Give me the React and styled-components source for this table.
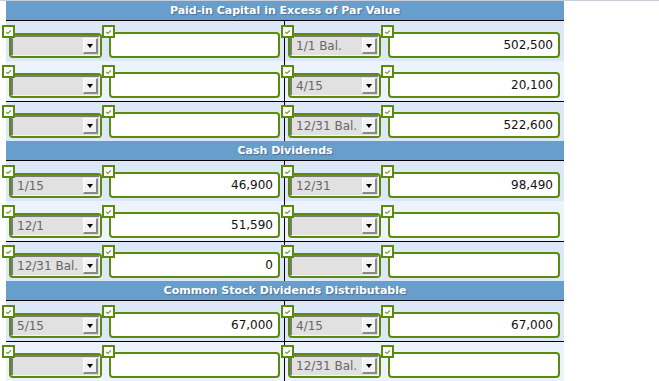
import React from "react";
import styled, { createGlobalStyle } from "styled-components";

const GlobalStyle = createGlobalStyle`
  html, body { margin: 0; padding: 0; background: #ffffff; }
  body { font-family: "DejaVu Sans", Verdana, sans-serif; }
`;

const GREEN = "#5b8a0c";

const Page = styled.div`
  width: 659px;
  height: 381px;
  overflow: hidden;
  border-top: 1px solid #c9ced8;
  box-sizing: border-box;
`;

const Table = styled.div`
  margin-left: 6px;
  width: 558px;
`;

const SectionHeader = styled.div`
  height: 20px;
  box-sizing: border-box;
  background: #689ecb;
  border-bottom: 1px solid #000;
  color: #fff;
  font-weight: bold;
  font-size: 11px;
  line-height: 19px;
  text-align: center;
  text-shadow: 1px 1px 1px rgba(40, 60, 90, 0.45);
`;

const Row = styled.div`
  display: grid;
  grid-template-columns: 279px 279px;
  height: 40px;
  box-sizing: border-box;
  background: ${(p) => (p.$shade ? "#dce8f7" : "#ecf3fd")};
  border-top: ${(p) => (p.$total ? "1px solid #000" : "none")};
`;

const Cell = styled.div`
  display: flex;
  align-items: flex-end;
  gap: 7px;
  padding: 0 4px 3px 3px;
  box-sizing: border-box;
  border-right: ${(p) => (p.$divider ? "1px solid #000" : "none")};
`;

const Field = styled.div`
  position: relative;
  flex: ${(p) => (p.$grow ? "1" : "none")};
  display: flex;
`;

const Check = styled.span`
  position: absolute;
  top: ${(p) => p.$top}px;
  left: -7px;
  width: 13px;
  height: 13px;
  box-sizing: border-box;
  border: 2px solid ${GREEN};
  background: #fff;
  display: flex;
  align-items: center;
  justify-content: center;
  z-index: 2;
`;

const SelectBox = styled.div`
  width: 93px;
  height: 25px;
  box-sizing: border-box;
  border: 2px solid ${GREEN};
  border-radius: 4px;
  background: #fff;
  display: flex;
`;

const SelectInner = styled.div`
  flex: 1;
  display: flex;
  align-items: center;
  box-sizing: border-box;
  border-top: 2px solid #7a7a7a;
  border-left: 2px solid #7a7a7a;
  border-bottom: 1px solid #f4f4f4;
  border-right: 1px solid #f4f4f4;
  background: #e1e1e1;
  padding-left: 4px;
  padding-right: 1px;
  min-width: 0;
`;

const SelectText = styled.span`
  flex: 1;
  font-size: 12px;
  color: #666;
  white-space: nowrap;
  overflow: hidden;
`;

const ArrowButton = styled.span`
  width: 15px;
  height: 16px;
  box-sizing: border-box;
  background: #f2f2f2;
  border-top: 1px solid #ffffff;
  border-left: 1px solid #ffffff;
  border-right: 2px solid #8a8a8a;
  border-bottom: 2px solid #8a8a8a;
  display: flex;
  align-items: center;
  justify-content: center;
`;

const Triangle = styled.span`
  width: 0;
  height: 0;
  border-left: 3.5px solid transparent;
  border-right: 3.5px solid transparent;
  border-top: 4px solid #000;
`;

const TextBox = styled.input`
  flex: 1;
  width: 100%;
  height: 26px;
  box-sizing: border-box;
  border: 2px solid ${GREEN};
  border-radius: 4px;
  background: #fff;
  font-family: "DejaVu Sans", Verdana, sans-serif;
  font-size: 12px;
  color: #111;
  text-align: right;
  padding: 0 5px 0 4px;
  outline: none;
  margin: 0;
`;

const CheckMark = () => (
  <svg width="9" height="9" viewBox="0 0 9 9">
    <polyline points="2.2,5 3.9,6.4 7,3.4" fill="none" stroke="#72a034" strokeWidth="1.3" />
  </svg>
);

const Select = ({ value }) => (
  <Field>
    <Check $top={-8}>
      <CheckMark />
    </Check>
    <SelectBox>
      <SelectInner>
        <SelectText>{value}</SelectText>
        <ArrowButton>
          <Triangle />
        </ArrowButton>
      </SelectInner>
    </SelectBox>
  </Field>
);

const Amount = ({ value }) => (
  <Field $grow>
    <Check $top={-7}>
      <CheckMark />
    </Check>
    <TextBox readOnly value={value} />
  </Field>
);

const sections = [
  {
    title: "Paid-in Capital in Excess of Par Value",
    rows: [
      { l: ["", ""], r: ["1/1 Bal.", "502,500"] },
      { l: ["", ""], r: ["4/15", "20,100"] },
      { l: ["", ""], r: ["12/31 Bal.", "522,600"], total: true },
    ],
  },
  {
    title: "Cash Dividends",
    rows: [
      { l: ["1/15", "46,900"], r: ["12/31", "98,490"] },
      { l: ["12/1", "51,590"], r: ["", ""] },
      { l: ["12/31 Bal.", "0"], r: ["", ""], total: true },
    ],
  },
  {
    title: "Common Stock Dividends Distributable",
    rows: [
      { l: ["5/15", "67,000"], r: ["4/15", "67,000"] },
      { l: ["", ""], r: ["12/31 Bal.", ""], total: true },
    ],
  },
];

export default function App() {
  return (
    <>
      <GlobalStyle />
      <Page>
        <Table>
          {sections.map((s) => (
            <React.Fragment key={s.title}>
              <SectionHeader>{s.title}</SectionHeader>
              {s.rows.map((r, i) => (
                <Row key={i} $shade={i % 2 === 0} $total={r.total}>
                  <Cell $divider>
                    <Select value={r.l[0]} />
                    <Amount value={r.l[1]} />
                  </Cell>
                  <Cell>
                    <Select value={r.r[0]} />
                    <Amount value={r.r[1]} />
                  </Cell>
                </Row>
              ))}
            </React.Fragment>
          ))}
        </Table>
      </Page>
    </>
  );
}
